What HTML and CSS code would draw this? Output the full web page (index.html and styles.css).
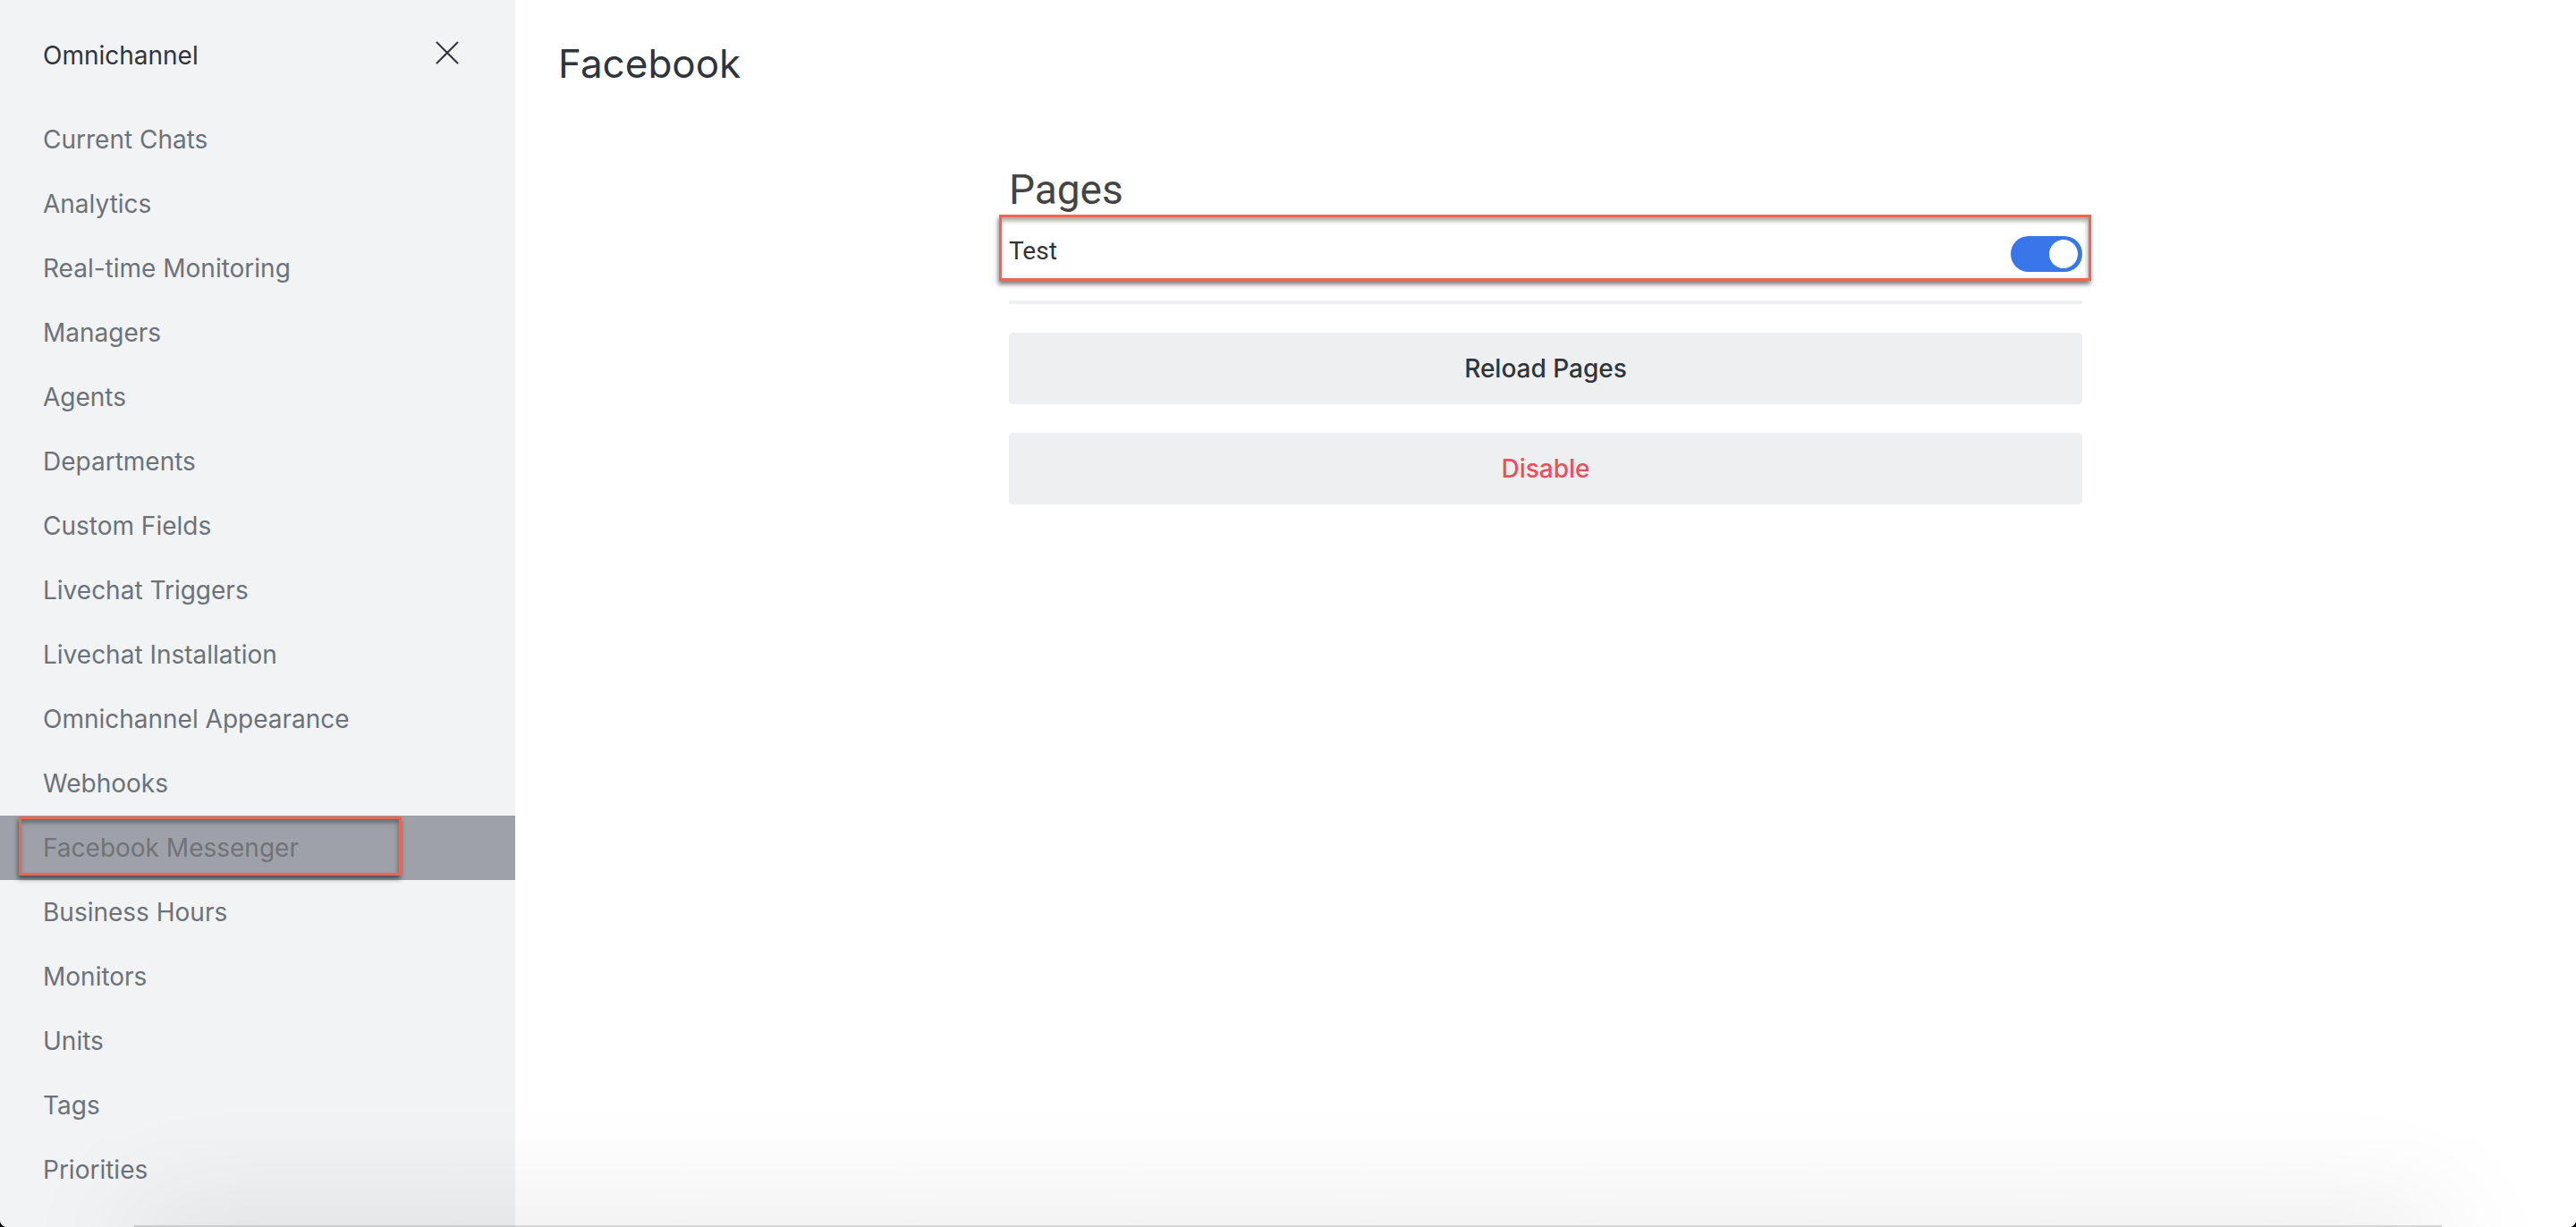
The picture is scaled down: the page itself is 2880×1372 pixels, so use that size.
FILE: index.html
```html
<!DOCTYPE html>
<html lang="en">
<head>
<meta charset="utf-8">
<title>Omnichannel - Facebook</title>
<link rel="stylesheet" href="styles.css">
</head>
<body>
<div class="app">
  <aside class="sidebar">
    <div class="sidebar-header">
      <span class="sidebar-title">Omnichannel</span>
      <svg class="close-icon" width="26" height="26" viewBox="0 0 26 26" aria-hidden="true">
        <path d="M1.5 1.5 L24.5 24.5 M24.5 1.5 L1.5 24.5" stroke="#2f343d" stroke-width="2" stroke-linecap="round" fill="none"/>
      </svg>
    </div>
    <nav class="nav">
      <div class="nav-item">Current Chats</div>
      <div class="nav-item">Analytics</div>
      <div class="nav-item">Real-time Monitoring</div>
      <div class="nav-item">Managers</div>
      <div class="nav-item">Agents</div>
      <div class="nav-item">Departments</div>
      <div class="nav-item">Custom Fields</div>
      <div class="nav-item">Livechat Triggers</div>
      <div class="nav-item">Livechat Installation</div>
      <div class="nav-item">Omnichannel Appearance</div>
      <div class="nav-item">Webhooks</div>
      <div class="nav-item nav-item-active">Facebook Messenger<span class="annot annot-nav"></span></div>
      <div class="nav-item">Business Hours</div>
      <div class="nav-item">Monitors</div>
      <div class="nav-item">Units</div>
      <div class="nav-item">Tags</div>
      <div class="nav-item">Priorities</div>
    </nav>
  </aside>
  <main class="main">
    <header class="page-header">Facebook</header>
    <section class="content">
      <h2 class="pages-title">Pages</h2>
      <div class="page-row">
        <span class="page-name">Test</span>
        <span class="toggle"><span class="knob"></span></span>
        <span class="annot annot-row"></span>
      </div>
      <button class="btn">Reload Pages</button>
      <button class="btn btn-danger">Disable</button>
    </section>
  </main>
</div>
<div class="bottom-shadow"></div>
</body>
</html>
```
FILE: styles.css
```css
html {
  background: #000;
}
body {
  margin: 0;
  width: 2880px;
  height: 1372px;
  overflow: hidden;
  position: relative;
  font-family: Inter, "Noto Sans", sans-serif;
}
.app {
  display: flex;
  width: 2880px;
  height: 1372px;
  background: #fff;
  border-radius: 0 0 8px 8px;
  overflow: hidden;
}
.sidebar {
  width: 576px;
  flex: 0 0 576px;
  background: #f2f3f5;
  display: flex;
  flex-direction: column;
}
.sidebar-header {
  height: 120px;
  display: flex;
  align-items: center;
  justify-content: space-between;
  padding: 4px 63px 0 48px;
  box-sizing: border-box;
}
.sidebar-title {
  font-size: 28px;
  line-height: 34px;
  color: #2f343d;
}
.close-icon {
  display: block;
  margin-top: -6px;
}
.nav {
  display: flex;
  flex-direction: column;
}
.nav-item {
  position: relative;
  height: 72px;
  display: flex;
  align-items: center;
  padding-left: 48px;
  font-size: 28px;
  color: #6c727a;
}
.nav-item-active {
  background: #9ea2a8;
  color: #6f737a;
}
.annot {
  position: absolute;
  border: 3px solid #ec6656;
  box-sizing: border-box;
  box-shadow: -1px 4px 5px rgba(0, 0, 0, 0.5), inset -1px 4px 5px rgba(0, 0, 0, 0.35);
  pointer-events: none;
}
.annot-nav {
  left: 21px;
  top: 1px;
  width: 428px;
  height: 66px;
}
.main {
  flex: 1;
  background: #fff;
  display: flex;
  flex-direction: column;
}
.page-header {
  padding: 44px 0 0 48px;
  font-size: 44px;
  line-height: 54px;
  color: #2f343d;
}
.content {
  width: 1200px;
  margin: 87px auto 0;
  display: flex;
  flex-direction: column;
}
.pages-title {
  margin: 0;
  font-family: Roboto, "Noto Sans", sans-serif;
  font-weight: 400;
  font-size: 46px;
  line-height: 54px;
  color: #444;
}
.page-row {
  position: relative;
  height: 90px;
  padding-bottom: 7px;
  border-bottom: 4px solid #eeeff1;
  display: flex;
  align-items: center;
  justify-content: space-between;
}
.page-name {
  font-family: Roboto, "Noto Sans", sans-serif;
  font-size: 28px;
  line-height: 34px;
  padding-bottom: 7px;
  color: #2f343d;
}
.toggle {
  width: 80px;
  height: 40px;
  border-radius: 20px;
  background: #3777e9;
  display: flex;
  align-items: center;
  justify-content: flex-end;
  padding-right: 5px;
  box-sizing: border-box;
}
.knob {
  width: 32px;
  height: 32px;
  border-radius: 50%;
  background: #fff;
}
.annot-row {
  left: -11px;
  top: 1px;
  width: 1221px;
  height: 74px;
}
.btn {
  margin-top: 32px;
  height: 80px;
  border: 0;
  border-radius: 4px;
  background: #eeeff1;
  font-family: Inter, "Noto Sans", sans-serif;
  font-size: 28px;
  font-weight: 500;
  color: #2f343d;
  padding: 0;
}
.btn-danger {
  color: #ea4f5f;
}
.bottom-shadow {
  position: absolute;
  left: 150px;
  right: 150px;
  top: 1370px;
  height: 60px;
  background: rgba(0, 0, 0, 0.16);
  box-shadow: 0 0 140px 0 rgba(0, 0, 0, 0.15);
  pointer-events: none;
}
```
